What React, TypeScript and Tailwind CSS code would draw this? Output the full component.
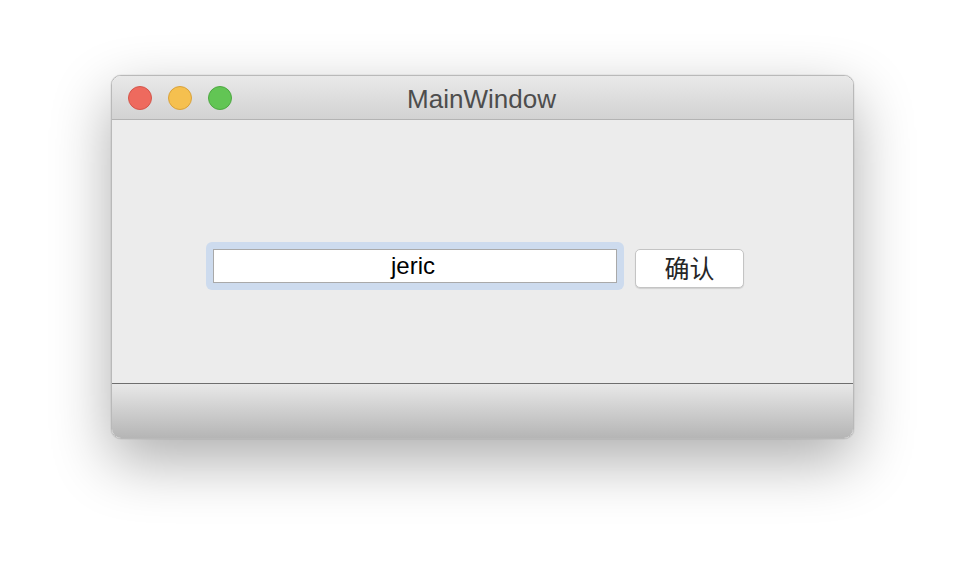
export default function App() {
  return (
    <div className="w-[966px] h-[586px] bg-white pt-[75px] pl-[111px]" style={{ fontFamily: '"Liberation Sans", "Noto Sans CJK SC", sans-serif' }}>
      <div className="w-[743px] h-[364px] rounded-[10px] overflow-hidden flex flex-col border border-[#b9b9b9] shadow-[0_22px_60px_rgba(0,0,0,0.32),0_0_1px_rgba(0,0,0,0.4)]">
        <div className="relative h-[44px] shrink-0 bg-gradient-to-b from-[#e9e9e9] to-[#d2d2d2] border-b border-[#b3b3b3] flex items-center">
          <div className="flex items-center gap-[16px] pl-[16px]">
            <div className="w-[24px] h-[24px] rounded-full bg-[#ee6a5e] border border-[#d4564b]" />
            <div className="w-[24px] h-[24px] rounded-full bg-[#f5c04f] border border-[#d9a23b]" />
            <div className="w-[24px] h-[24px] rounded-full bg-[#62c554] border border-[#4ea842]" />
          </div>
          <div className="absolute inset-0 flex items-center justify-center text-[26px] text-[#4d4d4d] pt-[3px] pr-[2px]">MainWindow</div>
        </div>
        <div className="h-[264px] shrink-0 bg-[#ececec] pt-[122px] pl-[94px] flex items-start border-b border-[#6e6e6e]">
          <div className="rounded-[6px] bg-[#cddbee] p-[7px]">
            <div className="w-[404px] h-[34px] bg-white border border-[#a9a9a9] flex items-center justify-center text-[24px] text-black pr-[4px]">jeric</div>
          </div>
          <div className="ml-[11px] mt-[7px] w-[109px] h-[39px] bg-white rounded-[5px] border border-[#c4c4c4] shadow-[0_1px_1px_rgba(0,0,0,0.12)] flex items-center justify-center text-[25px] text-[#262626] pb-[2px]" style={{ fontFamily: '"Noto Sans CJK SC", sans-serif' }}>确认</div>
        </div>
        <div className="flex-1 bg-gradient-to-b from-[#e8e8e8] to-[#b5b5b5]" />
      </div>
    </div>
  );
}
